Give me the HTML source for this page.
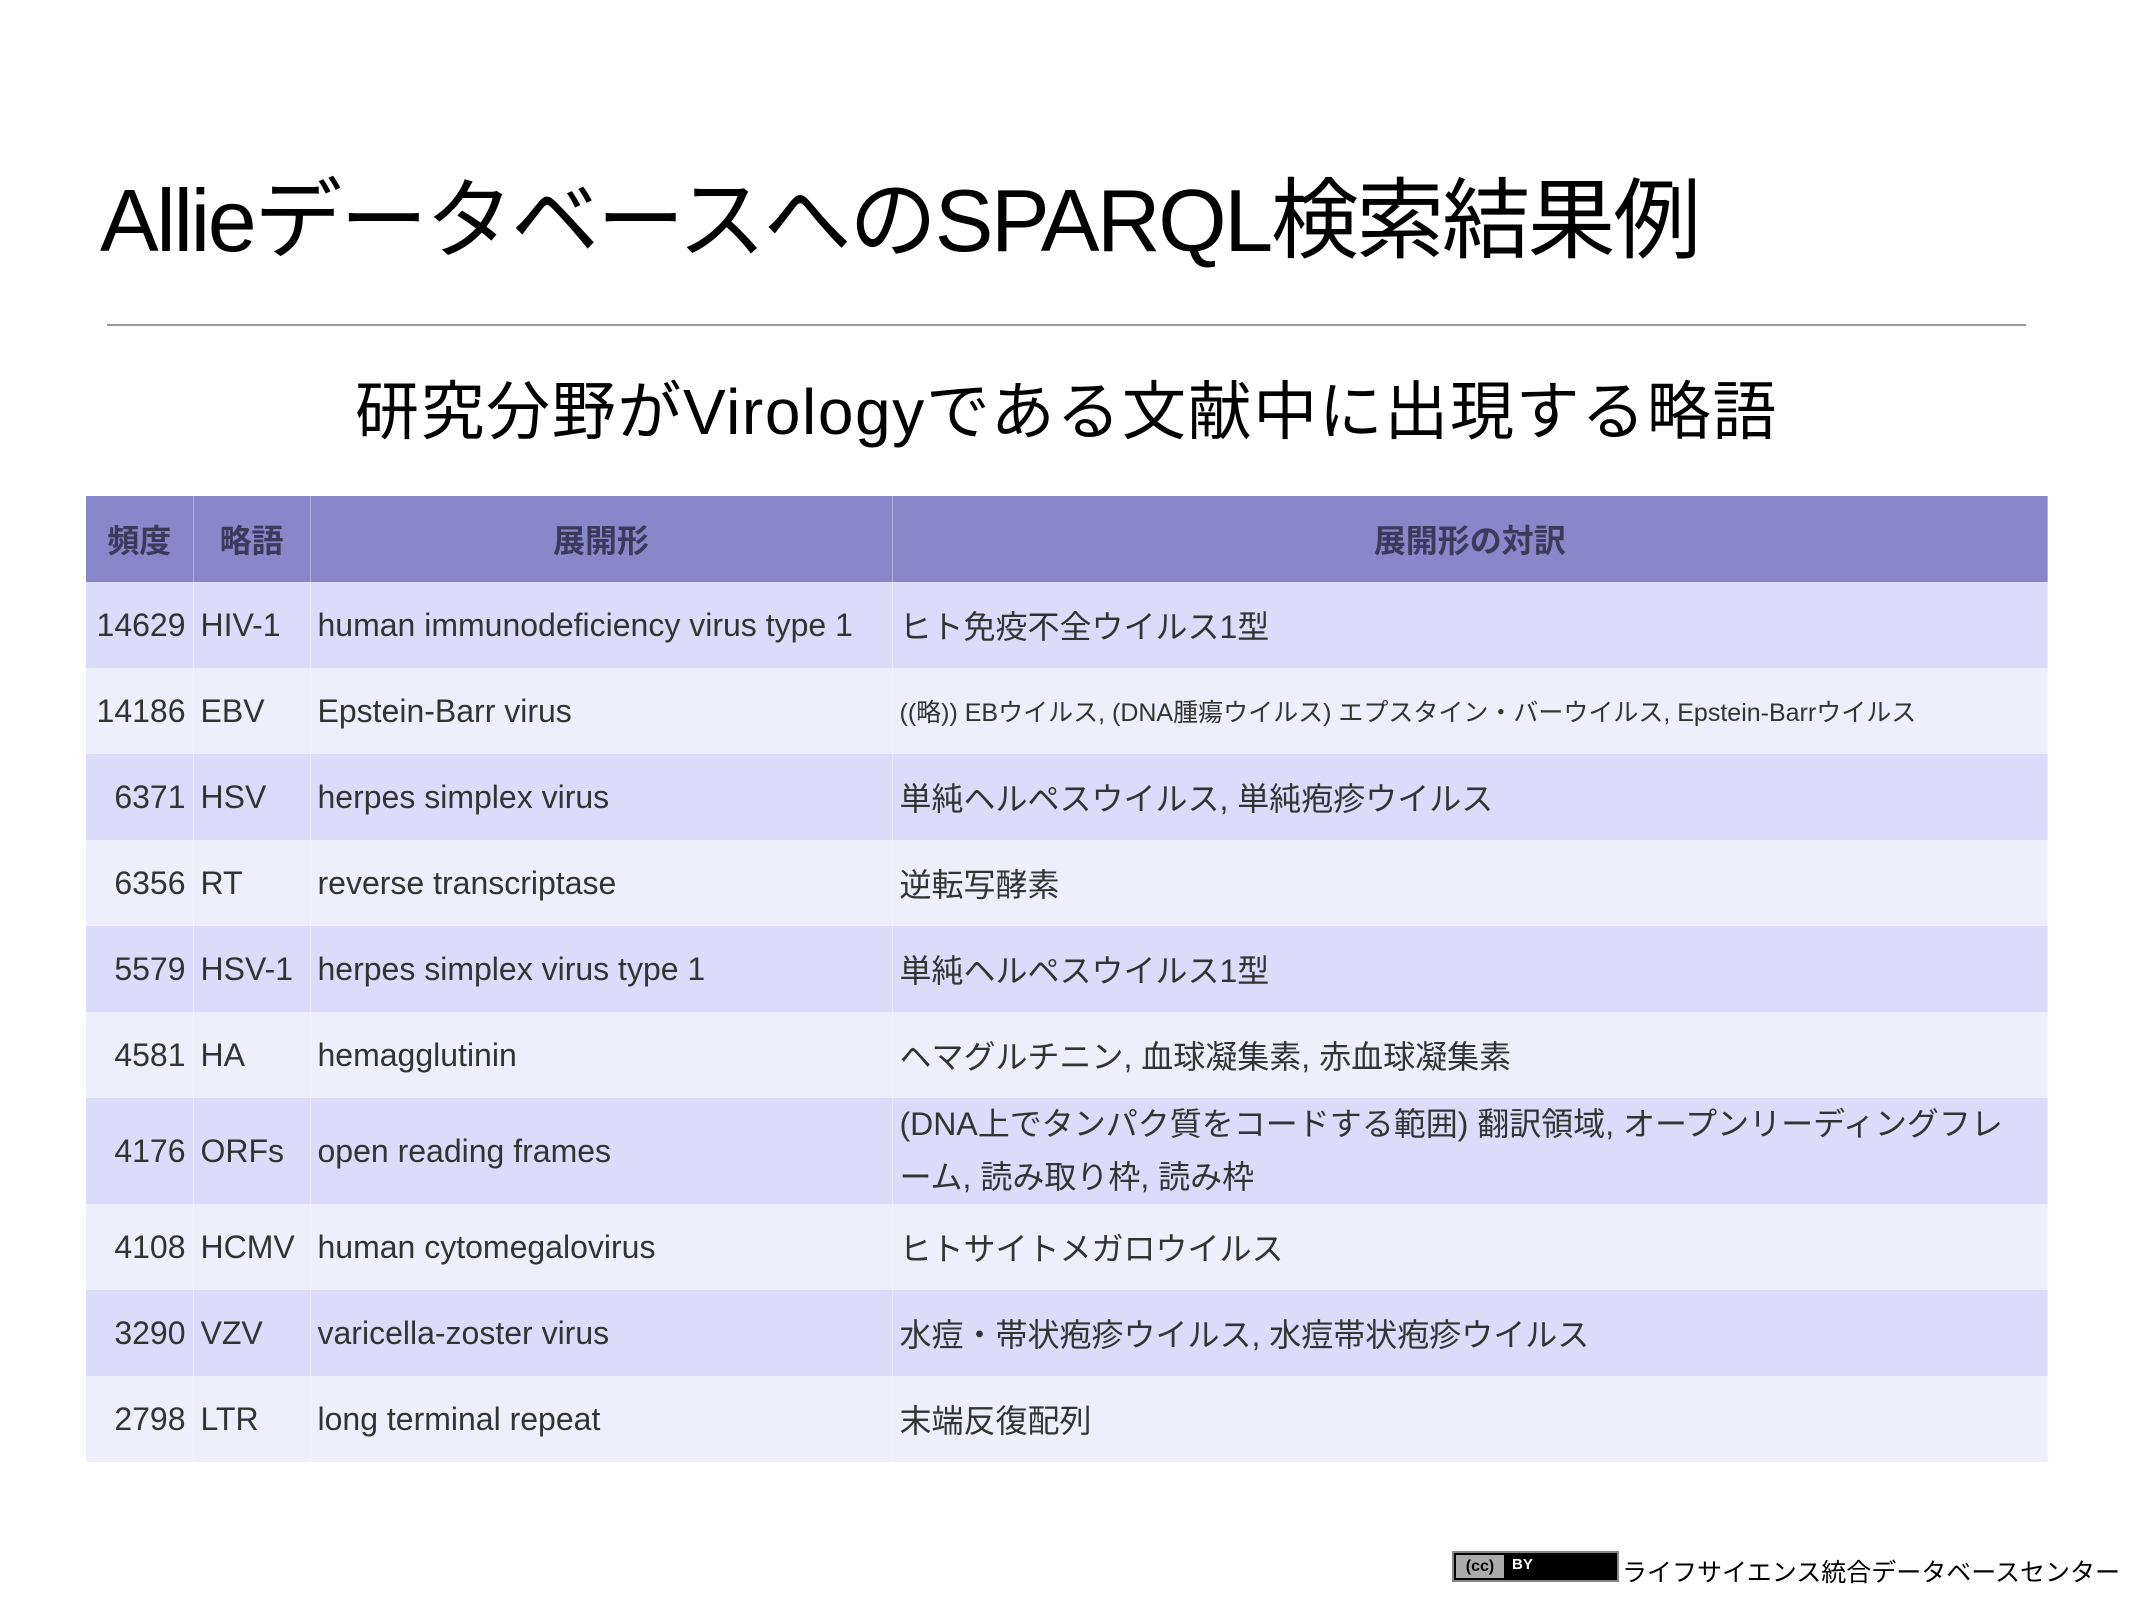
<!DOCTYPE html>
<html><head><meta charset="utf-8"><style>
body{margin:0;width:2133px;height:1600px;background:#fff;position:relative;overflow:hidden;font-family:"Liberation Sans","Noto Sans CJK JP",sans-serif;}
.t{position:absolute;white-space:nowrap;}
#title{left:100px;top:177px;font-size:88px;color:#000;letter-spacing:-2.4px;line-height:1;}
#line{position:absolute;left:107px;top:324px;width:1919px;height:2px;background:#999;}
#sub{left:0;width:2133px;text-align:center;top:380px;font-size:64px;color:#000;letter-spacing:1.6px;line-height:1;}
table{position:absolute;left:86px;top:496px;width:1962px;border-collapse:collapse;table-layout:fixed;}
td,th{padding:0 7px;font-size:32px;color:#333;white-space:nowrap;border-right:1px solid rgba(255,255,255,.35);}
th{background:#8787c9;height:86px;font-weight:bold;color:#3a3a5a;}
tr.o td{background:#dcdcfa;}
tr.e td{background:#eeeefc;}
tr td{height:86px;}
td.n{text-align:right;}
td.sm{font-size:25px;}
td.wrap{white-space:normal;line-height:53px;}
#cc{position:absolute;left:1452px;top:1551px;width:167px;height:31px;background:#000;border:2px solid #888;box-sizing:border-box;}
#cc .g{position:absolute;left:2px;top:2px;width:48px;height:23px;background:#aaa;font-size:16px;font-weight:bold;color:#000;text-align:center;line-height:23px;}
#cc .by{position:absolute;left:58px;top:3px;color:#fff;font-size:15px;font-weight:bold;}
#foot{left:1622px;top:1553px;font-size:25px;color:#000;letter-spacing:0;}
</style></head><body>
<div class="t" id="title">Allieデータベースへの<span>SPARQL</span>検索結果例</div>
<div id="line"></div>
<div class="t" id="sub">研究分野がVirologyである文献中に出現する略語</div>
<table>
<colgroup><col style="width:107px"><col style="width:117px"><col style="width:582px"><col></colgroup>
<tr><th>頻度</th><th>略語</th><th>展開形</th><th>展開形の対訳</th></tr>
<tr class="o"><td class="n">14629</td><td>HIV-1</td><td>human immunodeficiency virus type 1</td><td>ヒト免疫不全ウイルス1型</td></tr>
<tr class="e"><td class="n">14186</td><td>EBV</td><td>Epstein-Barr virus</td><td class="sm">((略)) EBウイルス, (DNA腫瘍ウイルス) エプスタイン・バーウイルス, Epstein-Barrウイルス</td></tr>
<tr class="o"><td class="n">6371</td><td>HSV</td><td>herpes simplex virus</td><td>単純ヘルペスウイルス, 単純疱疹ウイルス</td></tr>
<tr class="e"><td class="n">6356</td><td>RT</td><td>reverse transcriptase</td><td>逆転写酵素</td></tr>
<tr class="o"><td class="n">5579</td><td>HSV-1</td><td>herpes simplex virus type 1</td><td>単純ヘルペスウイルス1型</td></tr>
<tr class="e"><td class="n">4581</td><td>HA</td><td>hemagglutinin</td><td>ヘマグルチニン, 血球凝集素, 赤血球凝集素</td></tr>
<tr class="o"><td class="n" style="height:106px">4176</td><td>ORFs</td><td>open reading frames</td><td class="wrap">(DNA上でタンパク質をコードする範囲) 翻訳領域, オープンリーディングフレ<br>ーム, 読み取り枠, 読み枠</td></tr>
<tr class="e"><td class="n">4108</td><td>HCMV</td><td>human cytomegalovirus</td><td>ヒトサイトメガロウイルス</td></tr>
<tr class="o"><td class="n">3290</td><td>VZV</td><td>varicella-zoster virus</td><td>水痘・帯状疱疹ウイルス, 水痘帯状疱疹ウイルス</td></tr>
<tr class="e"><td class="n">2798</td><td>LTR</td><td>long terminal repeat</td><td>末端反復配列</td></tr>
</table>
<div id="cc"><div class="g">(cc)</div><div class="by">BY</div></div>
<div class="t" id="foot">ライフサイエンス統合データベースセンター</div>
</body></html>
